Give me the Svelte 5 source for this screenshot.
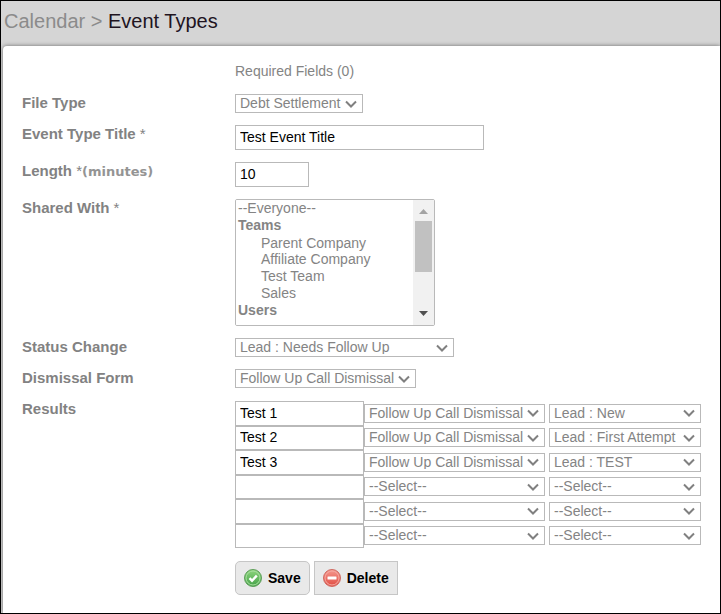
<script>
    const dismissalForms = ['Follow Up Call Dismissal', '--Select--'];
    const statuses = ['Lead : New', 'Lead : First Attempt', 'Lead : TEST', 'Lead : Needs Follow Up', '--Select--'];
    const teams = ['Parent Company', 'Affiliate Company', 'Test Team', 'Sales'];

    let fileType = 'Debt Settlement';
    let title = 'Test Event Title';
    let length = '10';
    let statusChange = 'Lead : Needs Follow Up';
    let dismissalForm = 'Follow Up Call Dismissal';

    let results = [
        { name: 'Test 1', form: 'Follow Up Call Dismissal', status: 'Lead : New' },
        { name: 'Test 2', form: 'Follow Up Call Dismissal', status: 'Lead : First Attempt' },
        { name: 'Test 3', form: 'Follow Up Call Dismissal', status: 'Lead : TEST' },
        { name: '', form: '--Select--', status: '--Select--' },
        { name: '', form: '--Select--', status: '--Select--' },
        { name: '', form: '--Select--', status: '--Select--' }
    ];
</script>

<div class="page">
    <h1><a href="#calendar">Calendar &gt;</a> Event Types</h1>

    <form class="panel" on:submit|preventDefault>
        <p class="required">Required Fields (0)</p>

        <label for="file-type">File Type</label>
        <div class="field">
            <select id="file-type" class="file-type" bind:value={fileType}>
                <option>Debt Settlement</option>
            </select>
        </div>

        <label for="title">Event Type Title <span class="star">*</span></label>
        <div class="field">
            <input id="title" class="title" type="text" bind:value={title} />
        </div>

        <label for="length">Length <span class="star">*</span><span class="unit">(minutes)</span></label>
        <div class="field">
            <input id="length" class="length" type="text" bind:value={length} />
        </div>

        <label for="shared">Shared With <span class="star">*</span></label>
        <div class="field">
            <div class="list">
                <select id="shared" class="shared" multiple>
                    <option>--Everyone--</option>
                    <optgroup label="Teams">
                        {#each teams as team}
                            <option>{team}</option>
                        {/each}
                    </optgroup>
                    <optgroup label="Users">
                        {#each Array(5) as _}
                            <option></option>
                        {/each}
                    </optgroup>
                </select>
                <div class="scrollbar" aria-hidden="true">
                    <svg width="9" height="5" viewBox="0 0 9 5"><path d="M0 5 4.5 0 9 5Z" fill="#a3a3a3" /></svg>
                    <div class="thumb"></div>
                    <svg class="down" width="9" height="5" viewBox="0 0 9 5"><path d="M0 0 4.5 5 9 0Z" fill="#505050" /></svg>
                </div>
            </div>
        </div>

        <label for="status">Status Change</label>
        <div class="field">
            <select id="status" class="status" bind:value={statusChange}>
                {#each statuses as s}
                    <option>{s}</option>
                {/each}
            </select>
        </div>

        <label for="dismissal">Dismissal Form</label>
        <div class="field">
            <select id="dismissal" class="dismissal" bind:value={dismissalForm}>
                {#each dismissalForms as f}
                    <option>{f}</option>
                {/each}
            </select>
        </div>

        <label for="result-0">Results</label>
        <div class="field results">
            {#each results as result, i}
                <div class="result">
                    <input id="result-{i}" type="text" aria-label="Result {i + 1}" bind:value={result.name} />
                    <select class="dismissal" aria-label="Dismissal form {i + 1}" bind:value={result.form}>
                        {#each dismissalForms as f}
                            <option>{f}</option>
                        {/each}
                    </select>
                    <select class="result-status" aria-label="Status {i + 1}" bind:value={result.status}>
                        {#each statuses as s}
                            <option>{s}</option>
                        {/each}
                    </select>
                </div>
            {/each}
        </div>

        <div class="actions">
            <button type="submit" class="save">
                <svg width="18" height="18" viewBox="0 0 18 18" aria-hidden="true">
                    <defs>
                        <linearGradient id="green" x1="0" y1="0" x2="0" y2="1">
                            <stop offset="0" stop-color="#8fd67e" />
                            <stop offset="1" stop-color="#43a047" />
                        </linearGradient>
                    </defs>
                    <circle cx="9" cy="9" r="8.5" fill="url(#green)" stroke="#5f9e5b" />
                    <circle cx="9" cy="9" r="7" fill="none" stroke="#a9dfa0" />
                    <path d="M5.5 9.2 8 11.7 12.8 6.6" fill="none" stroke="#fff" stroke-width="2.4" />
                </svg>
                Save
            </button>
            <button type="button">
                <svg width="18" height="18" viewBox="0 0 18 18" aria-hidden="true">
                    <defs>
                        <linearGradient id="red" x1="0" y1="0" x2="0" y2="1">
                            <stop offset="0" stop-color="#f59a90" />
                            <stop offset="1" stop-color="#e04a40" />
                        </linearGradient>
                    </defs>
                    <circle cx="9" cy="9" r="8.5" fill="url(#red)" stroke="#cf6a62" />
                    <circle cx="9" cy="9" r="7" fill="none" stroke="#f5aaa2" />
                    <rect x="4.5" y="7.5" width="9" height="3" rx="0.5" fill="#fff" />
                </svg>
                Delete
            </button>
        </div>
    </form>
</div>

<style>
    :global(body) {
        margin: 0;
        font-family: Arial, "Liberation Sans", sans-serif;
    }

    .page {
        box-sizing: border-box;
        min-height: 100vh;
        display: flex;
        flex-direction: column;
        border: 1px solid #000;
        padding-left: 2px;
        background: #d5d5d5;
    }

    h1 {
        margin: 0;
        padding: 8px 0 13px 1px;
        font-size: 20px;
        line-height: 24px;
        font-weight: normal;
        color: #21141f;
    }

    h1 a {
        color: #8b8b8b;
        text-decoration: none;
    }

    .panel {
        flex: 1;
        display: grid;
        grid-template-columns: 213px 1fr;
        align-content: start;
        row-gap: 12px;
        padding: 15px 18px 12px 19px;
        background: #fff;
        border-top-left-radius: 4px;
        box-shadow: 0 0 4px rgba(0, 0, 0, 0.5);
    }

    .required,
    .actions {
        grid-column: 2;
    }

    .required {
        margin: 0;
        padding-bottom: 1px;
        font-size: 14px;
        line-height: 20px;
        color: #848484;
    }

    label {
        height: 18px;
        font-size: 15px;
        line-height: 18px;
        font-weight: bold;
        color: #828282;
    }

    .star {
        font-weight: normal;
    }

    .unit {
        font-family: Verdana, "DejaVu Sans", sans-serif;
        font-size: 13px;
        color: #949494;
    }

    .field {
        display: flex;
    }

    input,
    select {
        box-sizing: border-box;
        margin: 0;
        border: 1px solid #b9b9b9;
        border-radius: 0;
        background-color: #fff;
        font-family: inherit;
        font-size: 14px;
    }

    input {
        height: 25px;
        padding: 0 4px 1px;
        color: #000;
    }

    select {
        height: 19px;
        padding: 0 18px 2px 4px;
        color: #848484;
        appearance: none;
        background-image: url("data:image/svg+xml,%3Csvg xmlns='http://www.w3.org/2000/svg' width='12' height='8'%3E%3Cpath d='M1 1.5 6 6.5 11 1.5' fill='none' stroke='%23808080' stroke-width='2'/%3E%3C/svg%3E");
        background-repeat: no-repeat;
        background-position: right 5px center;
    }

    .file-type {
        width: 128px;
    }

    .title {
        width: 249px;
    }

    .length {
        width: 74px;
    }

    .status {
        width: 219px;
    }

    .dismissal {
        width: 181px;
    }

    .list {
        position: relative;
        display: flex;
        width: 200px;
    }

    .shared {
        width: 100%;
        height: 127px;
        padding: 0;
        border-radius: 2px;
        background-image: none;
        overflow-y: scroll;
    }

    .shared option {
        padding-top: 0;
        padding-bottom: 0;
    }

    .shared optgroup option {
        padding-left: 25px;
    }

    .scrollbar {
        position: absolute;
        top: 1px;
        right: 1px;
        bottom: 1px;
        box-sizing: border-box;
        width: 21px;
        padding: 9px 0;
        display: flex;
        flex-direction: column;
        align-items: center;
        background: #f1f1f1;
    }

    .thumb {
        width: 17px;
        height: 51px;
        margin-top: 7px;
        background: #c1c1c1;
    }

    .down {
        margin-top: auto;
    }

    .results {
        height: 147px;
        flex-direction: column;
        margin-top: 1px;
    }

    .result {
        flex: 1;
        display: flex;
        align-items: center;
    }

    .result input {
        width: 129px;
        height: 100%;
    }

    .result-status {
        width: 152px;
        margin-left: 4px;
    }

    .actions {
        display: flex;
        gap: 4px;
        margin-top: 1px;
    }

    button {
        display: flex;
        align-items: center;
        gap: 6px;
        height: 34px;
        padding: 0 8px;
        border: 1px solid #c6c6c6;
        background: #e9e9e9;
        font-family: inherit;
        font-size: 14px;
        font-weight: bold;
        color: #000;
    }

    .save {
        border-radius: 5px;
    }
</style>
